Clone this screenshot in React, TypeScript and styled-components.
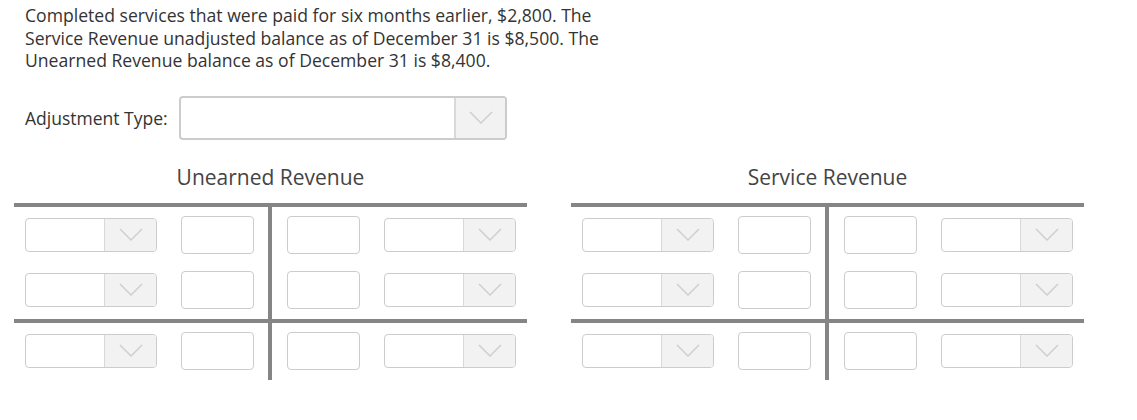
import styled, { createGlobalStyle } from 'styled-components';

const GlobalStyle = createGlobalStyle`
  html, body {
    margin: 0;
    padding: 0;
    background: #ffffff;
  }
  body {
    font-family: "Open Sans", "Liberation Sans", Arial, sans-serif;
    color: #333333;
  }
`;

const RULE = '#858585';

export default function App() {
  return (
    <>
      <GlobalStyle />
      <StyledPage>
        <StyledQuestion>
          Completed services that were paid for six months earlier, $2,800. The Service Revenue
          unadjusted balance as of December 31 is $8,500. The Unearned Revenue balance as of
          December 31 is $8,400.
        </StyledQuestion>

        <StyledAdjustRow>
          <StyledLabel>Adjustment Type:</StyledLabel>
          <Select width={328} height={44} buttonWidth={51} thick />
        </StyledAdjustRow>

        <StyledAccounts>
          <TAccount title="Unearned Revenue" />
          <TAccount title="Service Revenue" />
        </StyledAccounts>
      </StyledPage>
    </>
  );
}

const TAccount = ({ title }: { title: string }) => (
  <StyledAccount>
    <StyledTitle>{title}</StyledTitle>
    <StyledRule />
    <StyledSection>
      <StyledDebit>
        <EntryLeft />
        <EntryLeft />
      </StyledDebit>
      <StyledCredit>
        <EntryRight />
        <EntryRight />
      </StyledCredit>
    </StyledSection>
    <StyledRule />
    <StyledSection>
      <StyledDebit>
        <EntryLeft />
      </StyledDebit>
      <StyledCredit>
        <EntryRight />
      </StyledCredit>
    </StyledSection>
  </StyledAccount>
);

const EntryLeft = () => (
  <StyledEntry>
    <Select width={132} height={34} buttonWidth={52} />
    <StyledAmount />
  </StyledEntry>
);

const EntryRight = () => (
  <StyledEntry>
    <StyledAmount />
    <Select width={132} height={34} buttonWidth={52} />
  </StyledEntry>
);

const Select = (props: ISelectProps) => (
  <StyledSelect $width={props.width} $height={props.height} $thick={props.thick}>
    <StyledSelectValue />
    <StyledSelectButton $width={props.buttonWidth} $thick={props.thick}>
      <svg width="24" height="13" viewBox="0 0 24 13">
        <polyline points="1,1 12,12 23,1" fill="none" stroke="#cfcfcf" strokeWidth="1.5" />
      </svg>
    </StyledSelectButton>
  </StyledSelect>
);

const StyledPage = styled.div`
  padding: 4px 25px 20px 14px;
`;

const StyledQuestion = styled.p`
  margin: 0 0 0 11px;
  width: 590px;
  font-size: 17.6px;
  line-height: 22.5px;
  color: #333333;
`;

const StyledAdjustRow = styled.div`
  display: flex;
  align-items: center;
  margin: 24px 0 0 11px;
`;

const StyledLabel = styled.span`
  font-size: 17.5px;
  width: 154px;
  color: #333333;
`;

const StyledSelect = styled.div<{ $width: number; $height: number; $thick?: boolean }>`
  display: flex;
  box-sizing: border-box;
  width: ${(p) => p.$width}px;
  height: ${(p) => p.$height}px;
  border: ${(p) => (p.$thick ? 2 : 1)}px solid #cccccc;
  border-radius: 4px;
  background: #ffffff;
  overflow: hidden;
`;

const StyledSelectValue = styled.div`
  flex: 1;
`;

const StyledSelectButton = styled.div<{ $width: number; $thick?: boolean }>`
  display: flex;
  align-items: center;
  justify-content: center;
  box-sizing: border-box;
  width: ${(p) => p.$width}px;
  background: #f2f2f2;
  border-left: ${(p) => (p.$thick ? 2 : 1)}px solid #d9d9d9;
`;

const StyledAccounts = styled.div`
  display: flex;
  gap: 44px;
  margin-top: 24px;
`;

const StyledAccount = styled.div`
  width: 513px;
`;

const StyledTitle = styled.h2`
  margin: 0 0 13px;
  font-size: 21px;
  line-height: 26px;
  font-weight: 400;
  text-align: center;
  color: #444444;
`;

const StyledRule = styled.div`
  height: 4px;
  background: ${RULE};
`;

const StyledSection = styled.div`
  display: grid;
  grid-template-columns: 258px 1fr;
`;

const StyledDebit = styled.div`
  display: flex;
  flex-direction: column;
  gap: 17px;
  padding: 9px 14px 10px 11px;
  border-right: 4px solid ${RULE};
`;

const StyledCredit = styled.div`
  display: flex;
  flex-direction: column;
  gap: 17px;
  padding: 9px 11px 10px 15px;
`;

const StyledEntry = styled.div`
  display: flex;
  align-items: center;
  justify-content: space-between;
  height: 38px;
`;

const StyledAmount = styled.div`
  box-sizing: border-box;
  width: 73px;
  height: 38px;
  border: 1px solid #cccccc;
  border-radius: 4px;
  background: #ffffff;
`;

interface ISelectProps {
  width: number;
  height: number;
  buttonWidth: number;
  thick?: boolean;
}
